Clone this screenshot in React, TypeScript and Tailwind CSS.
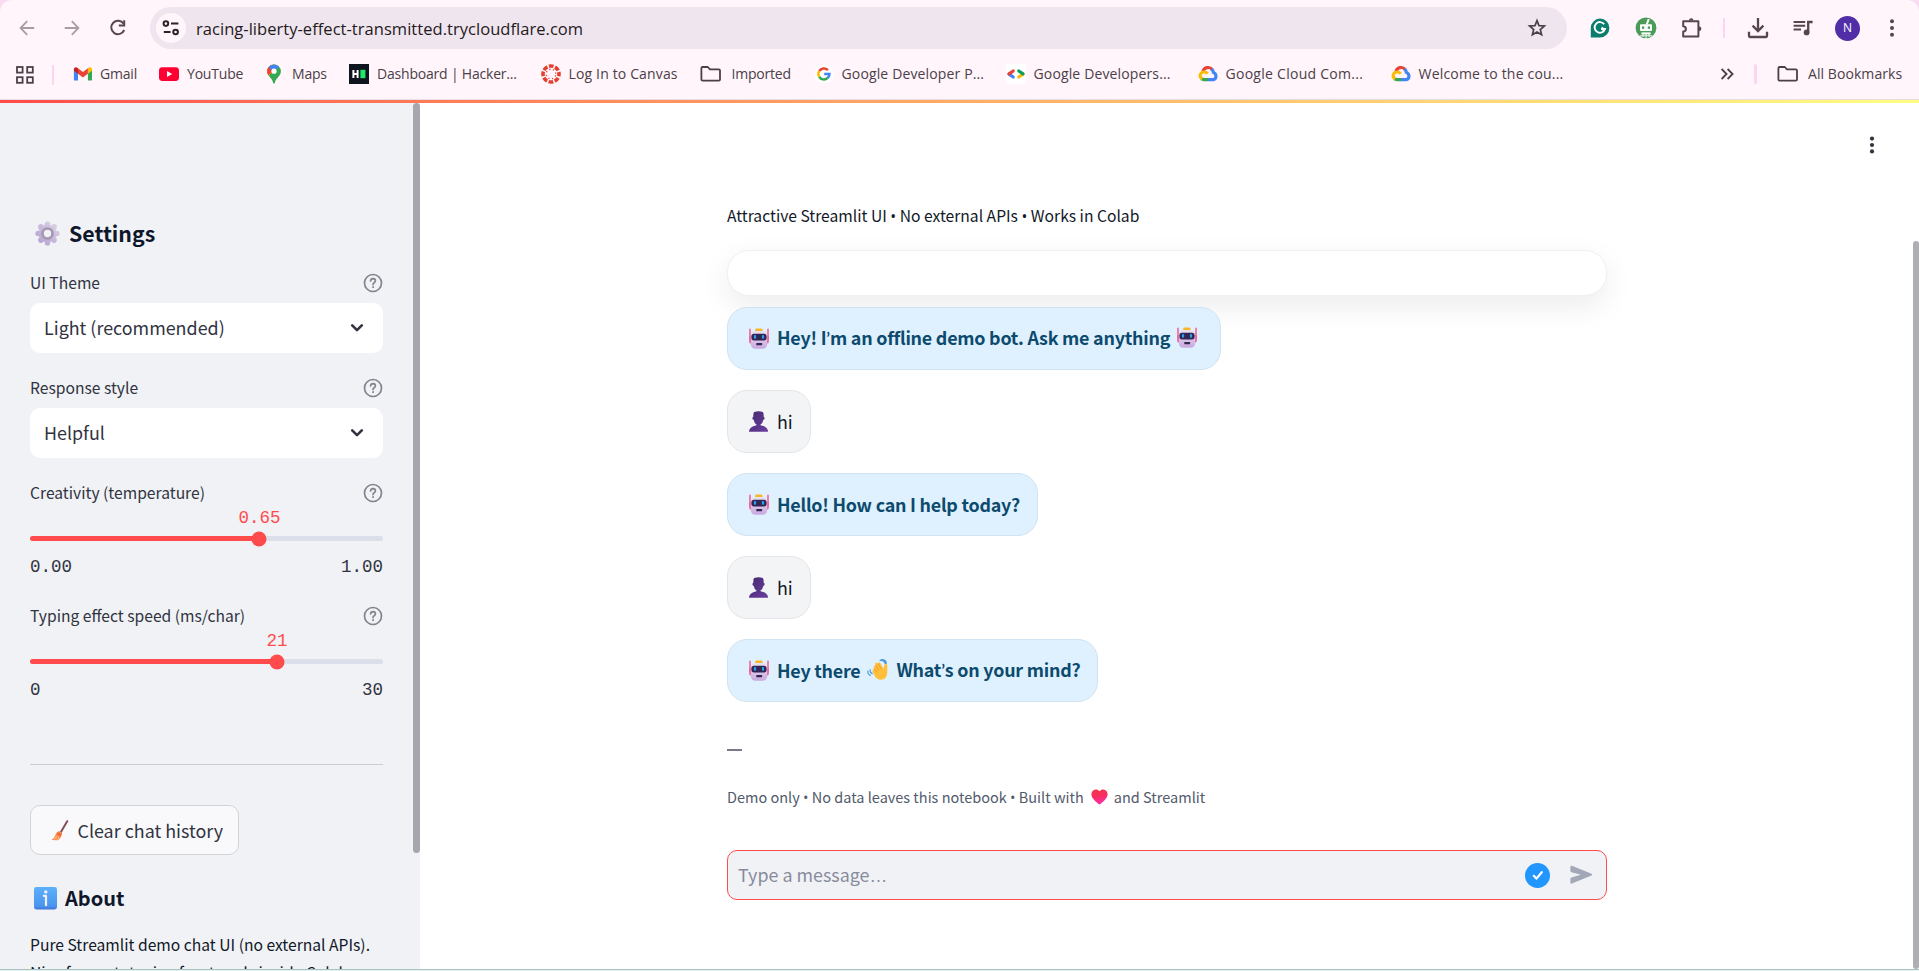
import React from "react";

/* ---------- chrome icons ---------- */

const ArrowLeft = ({ flip = false }: { flip?: boolean }) => (
  <svg width="16" height="16" viewBox="0 0 16 16" className={flip ? "-scale-x-100" : ""} fill="none" stroke="#a79da4" strokeWidth="1.8">
    <path d="M15.2 8H1.8M8.2 1.2 1.6 8l6.6 6.8" />
  </svg>
);

const Reload = () => (
  <svg width="18" height="18" viewBox="0 0 18 18" fill="none" stroke="#57454f" strokeWidth="2">
    <path d="M14.6 4.8A6.700 6.700 0 1 0 15.200 11" />
    <path d="M15.200 1.200v5.400H9.800" />
  </svg>
);

const Tune = () => (
  <svg width="18" height="16" viewBox="0 0 18 16" fill="none" stroke="#2a2328" strokeWidth="2">
    <circle cx="3.9" cy="3.6" r="2.3" />
    <path d="M9 3.6h7.4M1.8 12h6.8" />
    <circle cx="13.6" cy="12" r="2.3" />
  </svg>
);

const Star = () => (
  <svg width="20" height="20" viewBox="0 0 20 20" fill="none" stroke="#4b4048" strokeWidth="1.7" strokeLinejoin="miter">
    <path d="m10 2.6 2 5 5.4.4-4.1 3.5 1.3 5.3L10 14l-4.6 2.8 1.3-5.3L2.6 8 8 7.6z" />
  </svg>
);

const Grammarly = () => (
  <svg width="20" height="20" viewBox="0 0 20 20">
    <path d="M10 .6a9.3 9.3 0 1 1 0 18.8H.8V10A9.3 9.3 0 0 1 10 .6z" fill="#0b7d6c" />
    <path d="M14.2 6.2A5.3 5.3 0 1 0 15 11h-4" fill="none" stroke="#fff" strokeWidth="1.9" />
    <path d="m11.4 8.6 3.9 2-2.2 3.6z" fill="#fff" />
  </svg>
);

const GreenBot = () => (
  <svg width="22" height="22" viewBox="0 0 22 22">
    <circle cx="11" cy="10.8" r="10.4" fill="#4a9b58" />
    <path d="m10.600 7.6 2.200-5.800 2 .4-2 5.400z" fill="#fff" />
    <rect x="5" y="7.2" width="12" height="6.800" rx="1" fill="#fff" />
    <rect x="7" y="9.4" width="2.200" height="2.4" fill="#4a9b58" />
    <rect x="12.800" y="9.4" width="2.200" height="2.4" fill="#4a9b58" />
    <rect x="6.400" y="15.400" width="9.200" height="2" fill="#fff" />
    <path d="M4.600 18.800h12.800M8 17v3M11 17v5M14 17v3" stroke="#fff" strokeWidth=".9" />
  </svg>
);

const Puzzle = () => (
  <svg width="22" height="22" viewBox="0 0 22 22" fill="none" stroke="#57454f" strokeWidth="2" strokeLinejoin="round">
    <path d="M2.2 4.2h15.2v15.2H2.2v-4.8c3.6-.4 3.6-5 0-5.4z" />
    <path d="M8 3.6a2.2 2.4 0 0 1 4.4 0zM18 9.6a2.4 2.2 0 0 1 0 4.4z" fill="#57454f" stroke="none" />
  </svg>
);

const Download = () => (
  <svg width="22" height="22" viewBox="0 0 22 22" fill="none" stroke="#57454f" strokeWidth="2.3">
    <path d="M11 1v12.6M5.6 8.6 11 14l5.4-5.4" />
    <path d="M2 14.8v4.2q0 1 1 1h16q1 0 1-1v-4.2" />
  </svg>
);

const Playlist = () => (
  <svg width="20" height="18" viewBox="0 0 20 18" fill="none" stroke="#57454f" strokeWidth="2">
    <path d="M.6 3h11.6M.6 6.8h11.6M.6 10.6h7.4" />
    <path d="M15.2 13.4V3h4.4" strokeWidth="2.3" />
    <circle cx="13.6" cy="13.4" r="2.9" fill="#57454f" stroke="none" />
  </svg>
);

const Kebab = ({ r, gap, color }: { r: number; gap: number; color: string }) => (
  <svg width="6" height="20" viewBox="0 0 6 20" fill={color}>
    <circle cx="3" cy={10 - gap} r={r} />
    <circle cx="3" cy="10" r={r} />
    <circle cx="3" cy={10 + gap} r={r} />
  </svg>
);

const Apps = () => (
  <svg width="18" height="18" viewBox="0 0 18 18" fill="none" stroke="#4b4048" strokeWidth="1.8">
    <rect x="1" y="1" width="5.6" height="5.6" />
    <rect x="11.2" y="1" width="5.6" height="5.6" />
    <rect x="1" y="11.2" width="5.6" height="5.6" />
    <rect x="11.2" y="11.2" width="5.6" height="5.6" />
  </svg>
);

const Gmail = () => (
  <svg width="20" height="20" viewBox="0 0 20 20">
    <path d="M1.9 6v9.4q0 1.2 1.2 1.2h2.9V8.6z" fill="#4285f4" />
    <path d="M20 6v9.4q0 1.2-1.2 1.2h-2.9V8.6z" fill="#34a853" />
    <path d="M15.9 4.2v5.6L20 6.7V5.2c0-1.9-2-2.6-3.4-1.5z" fill="#fbbc04" />
    <path d="M6 9.8V4.2l4.95 3.7 4.95-3.7v5.6l-4.95 3.8z" fill="#ea4335" />
    <path d="M1.9 5.2v1.5L6 9.8V4.2l-.7-.5c-1.4-1.1-3.4-.4-3.4 1.5z" fill="#c5221f" />
  </svg>
);

const YouTube = () => (
  <svg width="20" height="20" viewBox="0 0 20 20">
    <rect x="0" y="3.2" width="20" height="13.8" rx="3.4" fill="#ff0033" />
    <path d="m8 7.1 5.2 3L8 13.1z" fill="#fff" />
  </svg>
);

const Maps = () => (
  <svg width="20" height="20" viewBox="0 0 20 20">
    <defs>
      <clipPath id="pin">
        <path d="M10 .4a6.9 6.9 0 0 0-6.9 6.9c0 4.9 5.1 6.4 6.1 11.6.2.9 1.4.9 1.6 0 1-5.2 6.1-6.7 6.1-11.6A6.9 6.9 0 0 0 10 .4z" />
      </clipPath>
    </defs>
    <g clipPath="url(#pin)">
      <rect width="20" height="20" fill="#34a853" />
      <path d="M0 16 17 0H0z" fill="#fbbc04" />
      <path d="M0 0h7L10 7 3 12H0z" fill="#ea4335" />
      <path d="M4.4 2.6 9.2 8 18 0H5z" fill="#4285f4" />
      <path d="M13 0 20 6V0z" fill="#1a73e8" />
    </g>
    <circle cx="10" cy="7.2" r="2.6" fill="#fff" />
  </svg>
);

const HackerRank = () => (
  <svg width="20" height="20" viewBox="0 0 20 20">
    <rect width="20" height="20" fill="#0e141e" />
    <path d="M4.4 6v8M8.6 6v8M4.4 10h4.2" stroke="#fff" strokeWidth="2" />
    <rect x="11.4" y="5.8" width="5" height="8.4" fill="#1ee867" />
  </svg>
);

const Canvas = () => (
  <svg width="20" height="20" viewBox="0 0 20 20" fill="none" stroke="#e4402f">
    <circle cx="10" cy="10" r="8" strokeWidth="3.6" strokeDasharray="4.7 1.583" strokeDashoffset="2.35" />
    <circle cx="10" cy="10" r="4.8" strokeWidth="1.3" strokeDasharray="1.2 2.57" strokeDashoffset="2.4" />
  </svg>
);

const Folder = () => (
  <svg width="22" height="18" viewBox="0 0 22 18" fill="none" stroke="#4b4048" strokeWidth="1.8" strokeLinejoin="round">
    <path d="M1.4 3.2q0-1.2 1.2-1.2h5.2l2.2 2.4h8.8q1.2 0 1.2 1.2v8.8q0 1.2-1.2 1.2H2.6q-1.2 0-1.2-1.2z" />
  </svg>
);

const Google = () => (
  <svg width="20" height="20" viewBox="0 0 20 20">
    <circle cx="10" cy="10" r="9.6" fill="#fff" />
    <g fill="none" strokeWidth="2.5">
      <path d="M13.9 6.1A5.5 5.5 0 0 0 5.2 7.2" stroke="#ea4335" />
      <path d="M5.2 7.2a5.5 5.5 0 0 0 0 5.6" stroke="#fbbc04" />
      <path d="M5.2 12.8a5.5 5.5 0 0 0 8.4 1.2" stroke="#34a853" />
      <path d="M13.6 14a5.5 5.5 0 0 0 1.9-4H10.2" stroke="#4285f4" />
    </g>
  </svg>
);

const GoogleDev = () => (
  <svg width="20" height="20" viewBox="0 0 20 20">
    <rect width="20" height="20" rx="2" fill="#fff" />
    <g fill="none" strokeWidth="3.2" strokeLinecap="round">
      <path d="m3 10.2 4.2 2.8" stroke="#4285f4" />
      <path d="M7.2 7 3 9.900" stroke="#ea4335" />
      <path d="m17 10.2-4.2 2.8" stroke="#fbbc04" />
      <path d="m12.8 7 4.2 2.900" stroke="#0f9d58" />
    </g>
  </svg>
);

const GoogleCloud = () => (
  <svg width="20" height="20" viewBox="0 0 20 20" fill="none" strokeWidth="3.2">
    <path d="M5 7.4a5.2 5.2 0 0 1 9.2-1.8" stroke="#ea4335" />
    <path d="M13.6 5c1.4 1.2 1.6 2.2 1.8 3.4 3.6 1.6 3.4 7.2-.8 7.2H10" stroke="#4285f4" />
    <path d="M10 15.6H6q-1.600 0-2.600-.8" stroke="#34a853" />
    <path d="M4 15.100c-3.200-2.400-2-7.100 2.200-7.100 1.800 0 2.800.8 3.400 1.800" stroke="#fbbc04" />
  </svg>
);

/* ---------- emoji-style drawings ---------- */

const Robot = () => (
  <svg width="20" height="21" viewBox="0 0 20 21" className="shrink-0">
    <defs>
      <linearGradient id="botFace" x1="0" y1="0" x2="0" y2="1">
        <stop offset="0" stopColor="#e9e2f0" />
        <stop offset="1" stopColor="#c9a8e0" />
      </linearGradient>
    </defs>
    <path d="M1 1.200v11M19 1.200v11" stroke="#f4467c" strokeWidth="1.300" strokeLinecap="round" />
    <path d="M.3 8.500Q.3 7.500 2 7.500v8Q.3 15.500.3 14.500zM19.700 8.500Q19.700 7.500 18 7.500v8q1.700 0 1.700-1z" fill="#ef5b91" />
    <rect x="6.200" y=".4" width="7.400" height="3.600" rx="1.400" fill="#fbb52c" />
    <rect x="1.800" y="3" width="16.400" height="17.800" rx="4.600" fill="url(#botFace)" />
    <rect x="2.400" y="5.800" width="15.200" height="6.600" rx="2.600" fill="#322655" />
    <rect x="4.900" y="7.100" width="2.200" height="3.700" rx="1" fill="#2aa0ea" />
    <rect x="12.900" y="7.100" width="2.200" height="3.700" rx="1" fill="#2aa0ea" />
    <rect x="7.300" y="15" width="5.800" height="2.300" rx=".6" fill="#37264d" />
  </svg>
);

const Person = () => (
  <svg width="20" height="21" viewBox="0 0 20 21" className="shrink-0">
    <defs>
      <linearGradient id="bust" x1="0" y1="0" x2="1" y2="1">
        <stop offset="0" stopColor="#46296f" />
        <stop offset="1" stopColor="#6a3f9f" />
      </linearGradient>
    </defs>
    <path
      d="M5.200.9Q9.600-.4 13.800.9q1 .6.900 4.800 1.300.5.700 2.200-.3 1-1.100.9-.4 3.300-2.800 4.600v.8q7.600 1.800 7.600 6.500H0q0-4.700 7.500-6.500v-.8q-2.400-1.300-2.800-4.600-.8.1-1.100-.9-.5-1.700.7-2.200-.1-4.200.9-4.800z"
      fill="url(#bust)"
    />
  </svg>
);

const Wave = () => (
  <svg width="22" height="21" viewBox="0 0 22 21" className="shrink-0">
    <g fill="none" stroke="#4f9bd8" strokeWidth="1.300" strokeLinecap="round">
      <path d="M13.200 1.400q4-.6 5.200 3.600M14.400.5q4.300.1 5 3.600" />
      <path d="M1 12.200q-.6 3 2.200 4.200M3.200 11q-.4 2.400 2 3.600" />
    </g>
    <path
      d="M6 9.200q-1-1.600.4-2.400.9-.4 1.600.4L7.200 5.600q-.6-1.500.7-2 1-.3 1.700.8l.4.700q-.4-1.700.8-2 1.200-.2 1.800 1.100l2.800 5.400.9-3.600q.5-1.600 2-1.200 1.200.4 1.100 2l-.2 7.200q-.6 6.200-6 6.600-4.200.2-6.400-3.800l-2.200-4.200q-.6-1.500.5-2.100z"
      transform="translate(1 .2)"
      fill="#ffbf3a"
    />
    <path d="m7.200 9.400 2.600 3.600M8.800 6.400l3.200 5M11.400 5l2.800 5" stroke="#f09a2c" strokeWidth=".9" strokeLinecap="round" />
  </svg>
);

const Heart = () => (
  <svg width="17" height="16" viewBox="0 0 17 16" className="shrink-0">
    <defs>
      <linearGradient id="heartFill" x1="0" y1="0" x2="0.300" y2="1">
        <stop offset="0" stopColor="#f0364a" />
        <stop offset=".5" stopColor="#f92d5c" />
        <stop offset="1" stopColor="#fb2fa0" />
      </linearGradient>
    </defs>
    <path d="M8.500 2.200C10.200.2 13 0 14.800 1.500c2.400 2 2.200 5.400.4 7.700-1.700 2.300-4 4.300-5.700 5.700q-1 .8-2 0C5.800 13.500 3.500 11.500 1.800 9.200 0 6.900-.2 3.500 2.200 1.500 4 0 6.800.2 8.500 2.200z" fill="url(#heartFill)" />
  </svg>
);

const Gear = () => (
  <svg width="25" height="25" viewBox="0 0 25 25">
    <defs>
      <linearGradient id="gearFill" gradientUnits="userSpaceOnUse" x1="4" y1="22" x2="20" y2="3">
        <stop offset="0" stopColor="#b7a3d2" />
        <stop offset="1" stopColor="#d8d0e2" />
      </linearGradient>
    </defs>
    <g fill="url(#gearFill)">
      <circle cx="12.500" cy="12.500" r="9" />
      <circle cx="12.500" cy="3.200" r="2.800" />
      <circle cx="12.500" cy="21.800" r="2.800" />
      <circle cx="3.200" cy="12.500" r="2.800" />
      <circle cx="21.800" cy="12.500" r="2.800" />
      <circle cx="5.900" cy="5.900" r="2.800" />
      <circle cx="19.100" cy="5.900" r="2.800" />
      <circle cx="5.900" cy="19.100" r="2.800" />
      <circle cx="19.100" cy="19.100" r="2.800" />
    </g>
    <circle cx="12.500" cy="12.500" r="5" fill="#f0f2f6" stroke="#a497b2" strokeWidth="2.600" />
  </svg>
);

const Broom = () => (
  <svg width="18" height="21" viewBox="0 0 18 21">
    <path d="m16.200 1.200-6.400 11" stroke="#83505a" strokeWidth="2" strokeLinecap="round" />
    <path d="M7.200 11.200q2-.4 4 2.200-.6 4-3.600 6.600-3.600.6-7.200-.2 2.600-1.400 3.400-3.600.8-3.400 3.400-5z" fill="#fb8f4f" />
    <path d="M6.900 12.200q2.200 0 3.400 2.600l-1 1.600q-1.600-2-3.600-2.200z" fill="#f4633a" />
    <path d="M3 19.400q2-1.200 2.600-3M6 19.800q1.400-1.200 1.800-2.800" stroke="#ffc69a" strokeWidth=".9" fill="none" />
  </svg>
);

const Info = () => (
  <svg width="23" height="23" viewBox="0 0 23 23">
    <defs>
      <linearGradient id="infoFill" x1="0" y1="0" x2="0" y2="1">
        <stop offset="0" stopColor="#5bb0fb" />
        <stop offset=".85" stopColor="#4a95ee" />
        <stop offset="1" stopColor="#3f72d8" />
      </linearGradient>
    </defs>
    <rect width="23" height="22.500" rx="2.400" fill="url(#infoFill)" />
    <circle cx="11.800" cy="4.900" r="1.700" fill="#f6eefc" />
    <path d="M9.800 8.800h2.200v9.400" fill="none" stroke="#f6eefc" strokeWidth="2.200" strokeLinecap="round" strokeLinejoin="round" />
  </svg>
);

const Help = () => (
  <svg width="20" height="20" viewBox="0 0 20 20" fill="none" stroke="#81838e" strokeWidth="1.700" strokeLinecap="round">
    <circle cx="10" cy="10" r="8.500" />
    <path d="M7.600 8q.2-2.400 2.500-2.400 2.300.1 2.300 2.100 0 1.200-1.300 2-1.100.7-1.100 1.900" />
    <circle cx="10" cy="14.100" r=".5" fill="#81838e" strokeWidth="1" />
  </svg>
);

const Chevron = () => (
  <svg width="14" height="10" viewBox="0 0 14 10" fill="none" stroke="#31333f" strokeWidth="2.600" strokeLinecap="round" strokeLinejoin="round">
    <path d="M2.200 2.400 7 7.200l4.800-4.800" />
  </svg>
);

const Send = () => (
  <svg width="24" height="20" viewBox="0 0 24 20">
    <path d="M1.400 2q0-1.700 1.600-1.200l19.500 8q1.500.9 0 1.800l-19.500 8q-1.600.4-1.600-1.200v-3.600q0-1 1-1.300L11.800 9.700 2.400 7.200q-1-.3-1-1.300z" fill="#a3a8b8" />
  </svg>
);

/* ---------- building blocks ---------- */

const Bookmark = ({
  width,
  icon,
  iconBox = "w-7",
  tracking = "tracking-[-0.2px]",
  children,
}: {
  width: string;
  icon: React.ReactNode;
  iconBox?: string;
  tracking?: string;
  children: string;
}) => (
  <div className={`flex shrink-0 items-center ${width}`}>
    <span className={`flex shrink-0 items-center ${iconBox}`}>{icon}</span>
    <span className={`whitespace-nowrap ${tracking}`}>{children}</span>
  </div>
);

const Label = ({ children }: { children: string }) => (
  <div className="flex h-5 items-center justify-between text-[15.65px] leading-5">
    <span>{children}</span>
    <Help />
  </div>
);

const Select = ({ value }: { value: string }) => (
  <div className="mt-2.5 flex h-[50px] items-center justify-between rounded-[10px] bg-white pl-3.5 pr-[19px] text-[17.9px] leading-6">
    <span className="pb-[3px]">{value}</span>
    <Chevron />
  </div>
);

const Slider = ({ value, percent, min, max }: { value: string; percent: number; min: string; max: string }) => (
  <div className="font-['Liberation_Mono',monospace] text-[17.5px] leading-5">
    <div className="relative mt-[33px] h-[5px] rounded-full bg-[#dadfe9]">
      <div className="h-full rounded-full bg-[#ff4b4b]" style={{ width: `${percent}%` }} />
      <div className="absolute top-1/2 size-[15px] -translate-x-1/2 -translate-y-1/2 rounded-full bg-[#ff4b4b]" style={{ left: `${percent}%` }} />
      <div className="absolute -top-7 -translate-x-1/2 text-[#ff4b4b]" style={{ left: `${percent}%` }}>{value}</div>
    </div>
    <div className="mt-4 flex justify-between">
      <span>{min}</span>
      <span>{max}</span>
    </div>
  </div>
);

const Quote = () => <span className="font-['Lato',sans-serif]">’</span>;
const Bullet = () => <span className="font-['Open_Sans',sans-serif]">•</span>;

const Bubble = ({ width, bot = false, children }: { width: string; bot?: boolean; children: React.ReactNode }) => (
  <div
    className={`mb-5 flex h-[63px] items-center whitespace-nowrap rounded-[20px] border pl-[21px] text-[17.9px] leading-6 ${width} ${
      bot ? "border-[#cfe3f0] bg-[#dff1fe] font-semibold tracking-[-0.23px] text-[#0c4a6e]" : "border-[#e4e5e8] bg-[#f3f4f6] text-[#111827]"
    }`}
  >
    {bot ? <Robot /> : <Person />}
    <span className="flex items-center gap-[7px] pb-0.5 pl-2">{children}</span>
  </div>
);

/* ---------- sections ---------- */

const BrowserBar = () => (
  <header className="h-[100px] bg-[#f9dcf1] font-['Open_Sans',sans-serif]">
    <div className="h-full rounded-t-xl border-b border-[#e8dde6] bg-[#fff5fa]">
      <div className="flex h-14 items-center">
        <div className="flex w-[150px] items-center gap-[29px] pb-px pl-[19px]">
          <ArrowLeft />
          <ArrowLeft flip />
          <Reload />
        </div>
        <div className="flex h-[42px] w-[1417px] items-center rounded-full bg-[#efe5ee] pl-1.5 pr-5">
          <span className="flex size-[30px] items-center justify-center rounded-full bg-[#fff5fa]">
            <Tune />
          </span>
          <span className="flex-1 pl-[10px] pt-px text-[16.5px] leading-6 tracking-[0.04px] text-[#1f1a1d]">racing-liberty-effect-transmitted.trycloudflare.com</span>
          <Star />
        </div>
        <div className="flex flex-1 items-center pl-[23px]">
          <Grammarly />
          <span className="w-[25px]" />
          <GreenBot />
          <span className="w-6" />
          <Puzzle />
          <span className="ml-5 h-5 w-0.5 rounded bg-[#fdd5f0]" />
          <span className="w-[22px]" />
          <Download />
          <span className="w-6" />
          <Playlist />
          <span className="ml-[22px] flex size-[25px] items-center justify-center rounded-full bg-[#512da8] text-[12px] text-white">N</span>
          <span className="w-[29px]" />
          <Kebab r={2} gap={6.8} color="#57454f" />
        </div>
      </div>
      <div className="flex h-[35px] items-center text-[14px] text-[#4b4048]">
        <div className="flex w-[72px] shrink-0 items-center pl-[15.5px] pt-0.5">
          <Apps />
          <span className="ml-[18px] h-5 w-0.5 rounded bg-[#fdd5f0]" />
        </div>
        <Bookmark width="w-[87px]" icon={<Gmail />}>Gmail</Bookmark>
        <Bookmark width="w-[105px]" icon={<YouTube />}>YouTube</Bookmark>
        <Bookmark width="w-[85px]" icon={<Maps />}>Maps</Bookmark>
        <Bookmark width="w-[191.500px]" icon={<HackerRank />}>Dashboard | Hacker...</Bookmark>
        <Bookmark width="w-[159px]" tracking="tracking-[0.15px]" icon={<Canvas />}>Log In to Canvas</Bookmark>
        <Bookmark width="w-[114px]" icon={<Folder />} iconBox="w-8">Imported</Bookmark>
        <Bookmark width="w-[192px]" tracking="tracking-[0.14px]" icon={<Google />}>Google Developer P...</Bookmark>
        <Bookmark width="w-[192px]" tracking="tracking-[0.14px]" icon={<GoogleDev />}>Google Developers...</Bookmark>
        <Bookmark width="w-[193px]" tracking="tracking-[0.27px]" icon={<GoogleCloud />}>Google Cloud Com...</Bookmark>
        <Bookmark width="w-[172px]" tracking="tracking-[0.2px]" icon={<GoogleCloud />}>Welcome to the cou...</Bookmark>
        <div className="flex flex-1 items-center justify-end pr-[17px]">
          <svg width="14" height="12" viewBox="0 0 14 12" fill="none" stroke="#4b4048" strokeWidth="1.800">
            <path d="m1.600 1 5 5-5 5M7.600 1l5 5-5 5" />
          </svg>
          <span className="ml-5 mr-5 h-5 w-[3px] rounded bg-[#fdd5f0]" />
          <Bookmark width="w-[125px]" tracking="tracking-[0.07px]" icon={<Folder />} iconBox="w-[31px]">All Bookmarks</Bookmark>
        </div>
      </div>
    </div>
  </header>
);

const Sidebar = () => (
  <aside className="flex w-[420px] shrink-0 justify-between overflow-hidden bg-[#f0f2f6] text-[#31333f]">
    <div className="w-[383px] pl-[30px] pt-[115px]">
      <h2 className="flex h-[30px] items-center pl-[4.500px] text-[21.3px] font-semibold leading-[30px] text-[#0f172a]">
        <Gear />
        <span className="pb-px pl-[9.500px]">Settings</span>
      </h2>
      <div className="mt-[25px]">
        <Label>UI Theme</Label>
        <Select value="Light (recommended)" />
      </div>
      <div className="mt-[25px]">
        <Label>Response style</Label>
        <Select value="Helpful" />
      </div>
      <div className="mt-[25px]">
        <Label>Creativity (temperature)</Label>
        <Slider value="0.65" percent={65} min="0.00" max="1.00" />
      </div>
      <div className="mt-[29px]">
        <Label>Typing effect speed (ms/char)</Label>
        <Slider value="21" percent={70} min="0" max="30" />
      </div>
      <hr className="mt-16 border-[#cbccd3]" />
      <button className="mt-10 flex h-[50px] w-[209px] items-center rounded-[10px] border border-[#d2d3d9] bg-[#f9f9fb] pl-5 text-[17.9px] leading-6">
        <Broom />
        <span className="pb-px pl-[8.500px]">Clear chat history</span>
      </button>
      <h3 className="mt-[29px] flex h-7 items-center pl-1 text-[20px] font-semibold leading-7 text-[#0f172a]">
        <Info />
        <span className="pl-2">About</span>
      </h3>
      <p className="mt-[19px] whitespace-nowrap text-[15.65px] leading-7 text-[#111827]">
        Pure Streamlit demo chat UI (no external APIs).
        <br />
        Nice for prototyping front-ends inside Colab.
      </p>
    </div>
    <div className="h-[750px] w-[7px] rounded-full bg-[#a6a6ae]" />
  </aside>
);

const Chat = () => (
  <main className="flex flex-1 bg-white">
    <div className="w-[307px] shrink-0" />
    <div className="w-[880px] shrink-0 pt-[101px]">
      <p className="h-6 text-[15.65px] leading-6 text-[#111827]">
        Attractive Streamlit UI <Bullet /> No external APIs <Bullet /> Works in Colab
      </p>
      <div className="mb-[11px] mt-[22px] h-[46px] rounded-[22px] border border-[#f0f0f1] bg-white shadow-[0_10px_30px_rgba(0,0,0,0.08)]" />
      <div className="relative">
        <Bubble bot width="w-[494px]">
          <span>Hey! I<Quote />m an offline demo bot. Ask me anything</span>
          <Robot />
        </Bubble>
        <Bubble width="w-[84px]">hi</Bubble>
        <Bubble bot width="w-[311px]">Hello! How can I help today?</Bubble>
        <Bubble width="w-[84px]">hi</Bubble>
        <Bubble bot width="w-[371px]">
          <span>Hey there</span>
          <Wave />
          <span>What<Quote />s on your mind?</span>
        </Bubble>
      </div>
      <div className="mt-[47px] h-0.5 w-[15px] bg-[#787b87]" />
      <p className="mt-[34px] flex h-6 items-center text-[14.5px] leading-6 text-[#525a6b]">
        <span>Demo only <Bullet /> No data leaves this notebook <Bullet /> Built with</span>
        <span className="w-[7px]" />
        <Heart />
        <span className="pl-1.5">and Streamlit</span>
      </p>
      <div className="mt-[41px] flex h-[50px] items-center rounded-[10px] border border-[#ff4b4b] bg-[#f0f2f6] pl-2.5 pr-[13px] text-[17.9px] leading-6 text-[#888b9c]">
        <span className="flex-1">Type a message<span className="font-['Liberation_Sans',sans-serif]">…</span></span>
        <span className="flex size-[25px] items-center justify-center rounded-full bg-[#2196ff]">
          <svg width="12" height="11" viewBox="0 0 12 11" fill="none" stroke="#fff" strokeWidth="2.200" strokeLinecap="round" strokeLinejoin="round">
            <path d="m1.800 5.800 2.600 2.800 5.400-6.400" />
          </svg>
        </span>
        <span className="w-[19px]" />
        <Send />
      </div>
    </div>
    <div className="flex w-[312px] shrink-0 justify-between">
      <div className="pl-[262px] pt-8">
        <Kebab r={2.1} gap={6.4} color="#31333f" />
      </div>
      <div className="mt-[138px] h-[728px] w-1.5 rounded-full bg-[#aeaeb5]" />
    </div>
  </main>
);

export default function App() {
  return (
    <div className="flex h-[971px] w-[1919px] flex-col overflow-hidden bg-white font-['Noto_Sans_CJK_SC',sans-serif]">
      <BrowserBar />
      <div className="h-[3px] bg-linear-to-r from-[#ff4b4b] to-[#fffd80]" />
      <div className="flex h-[866px] overflow-hidden">
        <Sidebar />
        <Chat />
      </div>
      <div className="h-0.5 border-t border-[#a9c3c4] bg-[#e2f3f2]" />
    </div>
  );
}
